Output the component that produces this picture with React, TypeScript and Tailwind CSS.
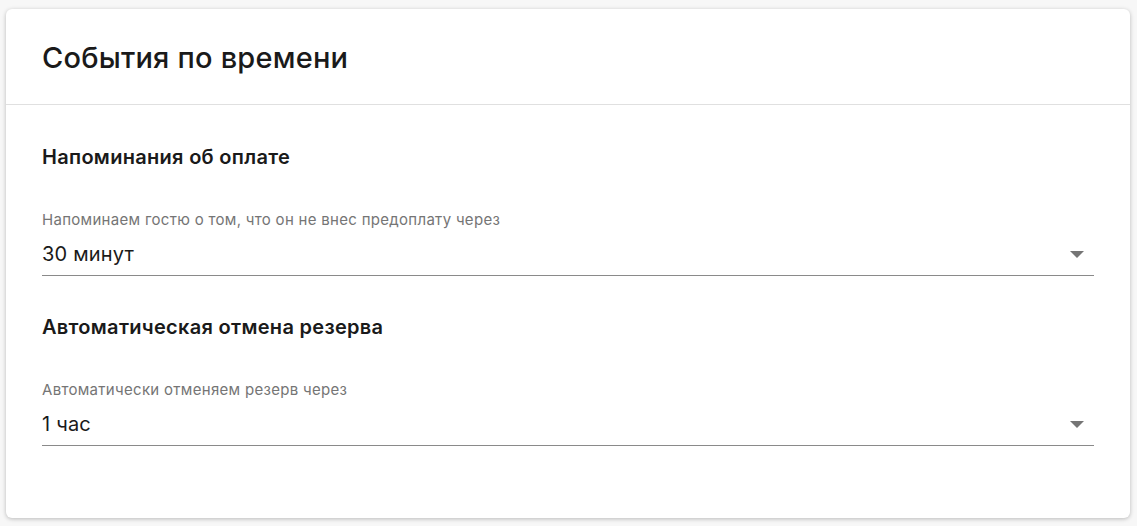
import React from 'react';

function SelectField({ label, value }: { label: string; value: string }) {
  return (
    <div className="mt-[42px]">
      <div className="text-[15px] leading-[18px] tracking-[0.3px] text-[#757575]">{label}</div>
      <div className="flex items-center justify-between h-[47px] border-b border-[#8a8a8a] pr-[10px]">
        <span className="text-[20px] tracking-[0.2px] text-[#1a1a1a] pt-[4px] pb-[1px]">{value}</span>
        <svg width="14" height="7" viewBox="0 0 14 7" className="mt-[4px]">
          <path d="M0 0 L14 0 L7 7 Z" fill="#757575" />
        </svg>
      </div>
    </div>
  );
}

export default function App() {
  return (
    <div className="min-h-[526px] bg-[#f7f7f7] pt-[9px] pl-[6px] pr-[7px] pb-[8px]" style={{ fontFamily: 'Inter, "Noto Sans", sans-serif' }}>
      <div className="bg-white rounded-[6px] shadow-[0_1px_4px_rgba(0,0,0,0.25)] h-[509px]">
        <div className="h-[96px] border-b border-[#e0e0e0] flex items-center pl-[36px]">
          <h1 className="text-[29px] tracking-[0.2px] font-medium text-[#1a1a1a] pt-[3px]">События по времени</h1>
        </div>
        <div className="px-[36px]">
          <div className="pt-[40px]">
            <h2 className="text-[20px] leading-[24px] tracking-[0.3px] font-semibold text-[#1a1a1a]">Напоминания об оплате</h2>
            <SelectField label="Напоминаем гостю о том, что он не внес предоплату через" value="30 минут" />
          </div>
          <div className="pt-[39px]">
            <h2 className="text-[20px] leading-[24px] tracking-[0.3px] font-semibold text-[#1a1a1a]">Автоматическая отмена резерва</h2>
            <SelectField label="Автоматически отменяем резерв через" value="1 час" />
          </div>
        </div>
      </div>
    </div>
  );
}
